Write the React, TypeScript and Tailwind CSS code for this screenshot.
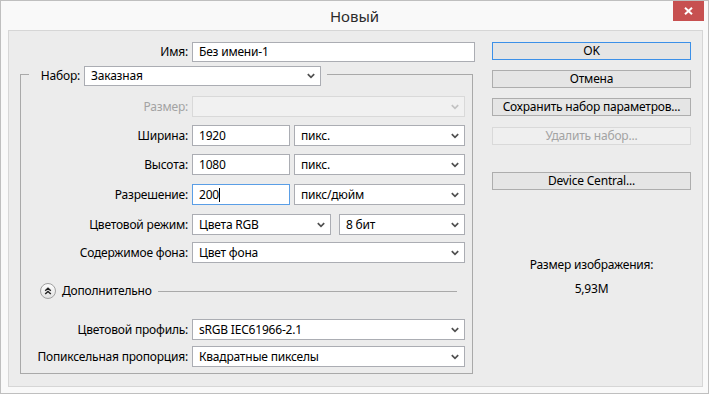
import React from "react";

function Chevron({ disabled }: { disabled?: boolean }) {
  return (
    <svg width="8" height="6" viewBox="0 0 8 6" className="shrink-0">
      <path d="M0.8 1.2 L4 4.4 L7.2 1.2" fill="none" stroke={disabled ? "#c2c2c2" : "#505050"} strokeWidth="1.7" />
    </svg>
  );
}

function TextBox({ value, w, focused, caret }: { value: string; w: string; focused?: boolean; caret?: boolean }) {
  return (
    <div
      className={`${w} h-[21px] bg-white border ${focused ? "border-[#5a9ee6]" : "border-[#abadb3]"} flex items-center pl-[6px] text-black`}
    >
      <span>{value}</span>
      {caret && <span className="w-px h-[14px] bg-black" />}
    </div>
  );
}

function Select({ value, w, disabled }: { value?: string; w: string; disabled?: boolean }) {
  return (
    <div
      className={`${w} h-[21px] border flex items-center justify-between pl-[6px] pr-[5px] ${
        disabled ? "bg-[#f1f1f1] border-[#d9d9d9]" : "bg-white border-[#abadb3] text-black"
      }`}
    >
      <span className="pt-[1px]">{value ?? ""}</span>
      <Chevron disabled={disabled} />
    </div>
  );
}

function Btn({ label, def, disabled, mt }: { label: string; def?: boolean; disabled?: boolean; mt: string }) {
  return (
    <div
      className={`${mt} w-[199px] h-[18px] border flex items-center justify-center ${
        disabled
          ? "bg-[#efefef] border-[#d9d9d9] text-[#a3a3a3]"
          : def
          ? "bg-[#e5e5e5] border-[#3c90e8] text-black"
          : "bg-[#e5e5e5] border-[#adadad] text-black"
      }`}
    >
      {label}
    </div>
  );
}

function Row({ label, mt, children, dim }: { label: string; mt: string; children: React.ReactNode; dim?: boolean }) {
  return (
    <div className={`${mt} flex items-center`}>
      <div className={`w-[167px] text-right ${dim ? "text-[#a3a3a3]" : "text-black"}`}>{label}</div>
      <div className="ml-[4px] flex items-center">{children}</div>
    </div>
  );
}

export default function App() {
  return (
    <div className="w-[709px] h-[395px] bg-white font-['Noto_Sans',sans-serif] text-[12px] leading-[16px] tracking-[-0.2px]">
      <div className="h-[394px] border border-[#bfbfbf] bg-[#f9f9f9] flex flex-col">
        {/* title bar */}
        <div className="h-[29px] grid grid-cols-[1fr_auto_1fr]">
          <div />
          <div className="self-center text-[15px] leading-[20px] text-[#2b2b2b] pt-[1px] tracking-normal">Новый</div>
          <div className="justify-self-end mr-[4px] w-[31px] h-[20px] bg-[#c75050] flex items-center justify-center">
            <svg width="9" height="8" viewBox="0 0 9 8">
              <path d="M1 0.8 L8 7.2 M8 0.8 L1 7.2" stroke="#fff" strokeWidth="2" />
            </svg>
          </div>
        </div>

        {/* body */}
        <div className="ml-[7px] w-[695px] h-[357px] border border-[#d6d6d6] bg-[#ececec] flex">
          {/* left column */}
          <div className="w-[466px] flex flex-col">
            <div className="mt-[11px] flex items-center">
              <div className="w-[179px] text-right text-black">Имя:</div>
              <div className="ml-[4px] w-[283px] h-[20px] bg-white border border-[#abadb3] flex items-center pl-[6px] text-black">
                Без имени-1
              </div>
            </div>

            <div className="mt-[12px] ml-[11px] w-[453px] h-[300px] border border-[#a9a9a9] flex flex-col">
              {/* legend */}
              <div className="-mt-[9px] ml-[8px] w-[298px] bg-[#ececec] flex items-center">
                <div className="w-[51px] text-right text-black">Набор:</div>
                <div className="ml-[4px] w-[237px] h-[20px] bg-white border border-[#abadb3] flex items-center justify-between pl-[6px] pr-[5px] text-black">
                  <span>Заказная</span>
                  <Chevron />
                </div>
              </div>

              <Row label="Размер:" mt="mt-[10px]" dim>
                <Select w="w-[273px]" disabled />
              </Row>
              <Row label="Ширина:" mt="mt-[8px]">
                <TextBox value="1920" w="w-[98px]" />
                <div className="ml-[4px]">
                  <Select value="пикс." w="w-[171px]" />
                </div>
              </Row>
              <Row label="Высота:" mt="mt-[8px]">
                <TextBox value="1080" w="w-[98px]" />
                <div className="ml-[4px]">
                  <Select value="пикс." w="w-[171px]" />
                </div>
              </Row>
              <Row label="Разрешение:" mt="mt-[9px]">
                <TextBox value="200" w="w-[98px]" focused caret />
                <div className="ml-[4px]">
                  <Select value="пикс/дюйм" w="w-[171px]" />
                </div>
              </Row>
              <Row label="Цветовой режим:" mt="mt-[9px]">
                <Select value="Цвета RGB" w="w-[139px]" />
                <div className="ml-[8px]">
                  <Select value="8 бит" w="w-[126px]" />
                </div>
              </Row>
              <Row label="Содержимое фона:" mt="mt-[7px]">
                <Select value="Цвет фона" w="w-[273px]" />
              </Row>

              {/* advanced */}
              <div className="mt-[20px] ml-[19px] mr-[15px] h-[16px] flex items-center">
                <div className="w-[16px] h-[16px] rounded-full border border-[#a0a0a0] bg-gradient-to-b from-[#fdfdfd] to-[#e2e2e2] flex items-center justify-center">
                  <svg width="8" height="8" viewBox="0 0 8 8">
                    <path d="M1.2 3.8 L4 1.2 L6.8 3.8 M1.2 7 L4 4.4 L6.8 7" fill="none" stroke="#222" strokeWidth="1.4" />
                  </svg>
                </div>
                <div className="ml-[6px] text-black">Дополнительно</div>
                <div className="ml-[6px] flex-1 h-px bg-[#a9a9a9]" />
              </div>

              <Row label="Цветовой профиль:" mt="mt-[20px]">
                <Select value="sRGB IEC61966-2.1" w="w-[273px]" />
              </Row>
              <Row label="Попиксельная пропорция:" mt="mt-[6px]">
                <Select value="Квадратные пикселы" w="w-[273px]" />
              </Row>
            </div>
          </div>

          {/* right column */}
          <div className="ml-[17px] w-[199px] flex flex-col">
            <Btn label="OK" def mt="mt-[11px]" />
            <Btn label="Отмена" mt="mt-[10px]" />
            <Btn label="Сохранить набор параметров..." mt="mt-[10px]" />
            <Btn label="Удалить набор..." disabled mt="mt-[11px]" />
            <Btn label="Device Central..." mt="mt-[27px]" />
            <div className="mt-[67px] text-center text-black">Размер изображения:</div>
            <div className="mt-[8px] text-center text-black">5,93M</div>
          </div>
        </div>
      </div>
    </div>
  );
}
